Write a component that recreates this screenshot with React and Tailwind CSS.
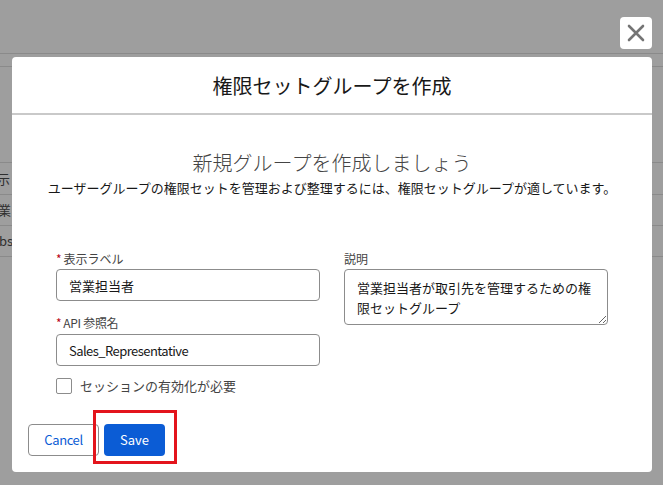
import React from "react";

const font = { fontFamily: '"Noto Sans CJK JP", "Noto Sans", sans-serif' };

export default function App() {
  return (
    <div
      className="relative w-[663px] h-[485px] overflow-hidden bg-[#9e9e9e] text-[#333]"
      style={font}
    >
      {/* page behind the overlay */}
      <div className="h-[54px] border-b border-[#8a8a8a]" />
      <div className="h-[13px] border-b border-[#8a8a8a]" />
      <div className="h-[95px]" />
      <div className="border-t border-[#8a8a8a]">
        <div className="h-[32px] border-b border-[#8a8a8a] flex items-center text-[13px] text-[#2e2e2e]">
          <span className="-ml-[3px]">示</span>
        </div>
        <div className="h-[31px] border-b border-[#8a8a8a] flex items-center text-[13px] text-[#2e2e2e]">
          <span className="-ml-[2px]">業</span>
        </div>
        <div className="h-[31px] border-b border-[#8a8a8a] flex items-center text-[13px] text-[#2e2e2e]">
          <span className="-ml-[1px]">bs</span>
        </div>
      </div>

      {/* close button */}
      <button className="absolute left-[620px] top-[17px] w-[32px] h-[32px] bg-white rounded-[4px] flex items-center justify-center">
        <svg width="18" height="18" viewBox="0 0 18 18">
          <path d="M2 2 L16 16 M16 2 L2 16" stroke="#747474" strokeWidth="2.6" strokeLinecap="round" />
        </svg>
      </button>

      {/* modal */}
      <div className="absolute left-[12px] top-[57px] w-[640px] h-[415px] bg-white rounded-[4px] flex flex-col">
        <div className="h-[58px] border-b-2 border-[#c9c9c9] flex items-center justify-center pt-[2px]">
          <h2 className="text-[20px] leading-[28px] text-[#181818]">権限セットグループを作成</h2>
        </div>

        <div className="flex-1 flex flex-col">
          <div className="pt-[34px] text-center">
            <div className="text-[20px] leading-[28px] font-light text-[#444]">新規グループを作成しましょう</div>
            <div className="mt-[1px] text-[13px] leading-[20px] text-[#181818]">
              ユーザーグループの権限セットを管理および整理するには、権限セットグループが適しています。
            </div>
          </div>

          <div className="mt-[52px] px-[44px] grid grid-cols-2 gap-x-6">
            <div className="flex flex-col">
              <label className="text-[12px] leading-[18px] text-[#444] mb-[1px]">
                <span className="text-[#ba0517] mr-[2px]">*</span>表示ラベル
              </label>
              <input
                readOnly
                value="営業担当者"
                className="h-[32px] w-full rounded-[4px] border border-[#8c8c8c] px-[12px] text-[13px] text-[#181818] outline-none"
              />
              <label className="mt-[13px] text-[12px] leading-[18px] text-[#444] mb-[2px] tracking-[-0.3px]">
                <span className="text-[#ba0517] mr-[2px]">*</span>API 参照名
              </label>
              <input
                readOnly
                value="Sales_Representative"
                className="h-[32px] w-full rounded-[4px] border border-[#8c8c8c] px-[12px] text-[13px] tracking-[-0.55px] text-[#181818] outline-none"
              />
              <div className="mt-[10px] flex items-center">
                <span className="w-[16px] h-[16px] border border-[#8c8c8c] rounded-[2px] bg-white" />
                <span className="ml-[8px] text-[13px] leading-[20px] text-[#444]">セッションの有効化が必要</span>
              </div>
            </div>
            <div className="flex flex-col">
              <label className="text-[12px] leading-[18px] text-[#444] mb-[1px]">説明</label>
              <textarea
                readOnly
                value="営業担当者が取引先を管理するための権限セットグループ"
                className="h-[56px] w-full rounded-[4px] border border-[#8c8c8c] px-[12px] py-[8px] text-[13px] leading-[19.5px] text-[#181818] outline-none overflow-hidden"
              />
            </div>
          </div>
        </div>

        <div className="px-[16px] pb-[16px] flex items-center gap-[5px]">
          <button className="h-[32px] w-[71px] rounded-[4px] border border-[#8c8c8c] bg-white text-[13px] tracking-[-0.4px] text-[#0b5cd5]">
            Cancel
          </button>
          <button className="h-[32px] w-[61px] rounded-[4px] bg-[#0b5cd5] text-[13px] text-white">
            Save
          </button>
        </div>

        {/* red highlight */}
        <div className="absolute left-[81px] top-[353px] w-[84px] h-[54px] border-[3px] border-[#e3141c]" />
      </div>
    </div>
  );
}
